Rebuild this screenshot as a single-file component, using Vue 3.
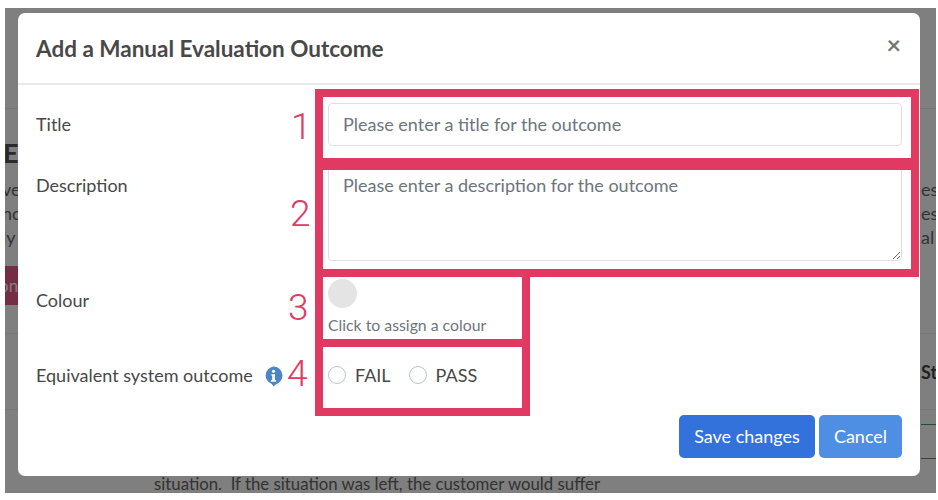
<template>
  <div class="frame">
    <!-- page behind the dialog -->
    <div class="page">
      <div class="page-row row-a"></div>
      <div class="page-row row-b">
        <span class="heading">E</span>
      </div>
      <div class="page-row row-text">
        <span class="left-frag">ve</span>
        <span class="right-frag">es t</span>
      </div>
      <div class="page-row row-text">
        <span class="left-frag">nc</span>
        <span class="right-frag">es</span>
      </div>
      <div class="page-row row-text">
        <span class="left-frag">ly</span>
        <span class="right-frag">al</span>
      </div>
      <div class="page-row row-btn">
        <span class="page-btn">on</span>
      </div>
      <div class="page-row row-head">
        <span class="right-head">St</span>
      </div>
      <div class="page-row row-green">
        <span class="green-box"></span>
      </div>
      <div class="page-row row-bottom">situation.&nbsp; If the situation was left, the customer would suffer</div>
    </div>

    <div class="backdrop">
      <div class="modal">
        <div class="modal-header">
          <h2>Add a Manual Evaluation Outcome</h2>
          <button class="close-btn">×</button>
        </div>

        <div class="modal-body">
          <label class="field-label">Title</label>
          <input class="text-input" type="text" placeholder="Please enter a title for the outcome" />

          <label class="field-label">Description</label>
          <textarea class="text-area" placeholder="Please enter a description for the outcome"></textarea>

          <label class="field-label">Colour</label>
          <div class="colour-cell">
            <span class="swatch"></span>
            <small>Click to assign a colour</small>
          </div>

          <label class="field-label label-system">
            Equivalent system outcome
            <svg class="info" viewBox="0 0 20 22" width="19" height="21">
              <path d="M10 0.5a9.5 9.5 0 0 1 2.6 18.6L10 21.5l-1.8-2.6A9.5 9.5 0 0 1 10 0.5z" fill="#4a86c5" />
              <circle cx="10" cy="5.6" r="1.7" fill="#fff" />
              <path d="M7.8 8.6h3.8v6.2h1.2v1.7H7.4v-1.7h1.2v-4.5h-0.8z" fill="#fff" />
            </svg>
          </label>
          <div class="radio-cell">
            <label class="radio" v-for="opt in outcomes" :key="opt">
              <span class="radio-dot"></span>{{ opt }}
            </label>
          </div>
        </div>

        <div class="modal-actions">
          <button class="btn btn-primary">Save changes</button>
          <button class="btn btn-secondary">Cancel</button>
        </div>

        <!-- annotation boxes drawn over the form -->
        <div v-for="box in boxes" :key="box.n" class="mark" :class="box.cls"></div>
        <span v-for="box in boxes" :key="'n' + box.n" class="mark-num" :class="'num-' + box.n">{{ box.n }}</span>
      </div>
    </div>
  </div>
</template>

<script setup>
const outcomes = ['FAIL', 'PASS']

const boxes = [
  { n: 1, cls: 'mark-1' },
  { n: 2, cls: 'mark-2' },
  { n: 3, cls: 'mark-3' },
  { n: 4, cls: 'mark-4' }
]
</script>

<style>
html, body {
  background: #fff;
}
</style>

<style scoped>
.frame {
  position: relative;
  width: 931px;
  height: 485px;
  margin: 8px 0 0 5px;
  overflow: hidden;
  font-family: Lato, "Liberation Sans", sans-serif;
  color: #343a40;
}

.page {
  height: 100%;
  background: #fff;
}

.page-row {
  display: flex;
  justify-content: space-between;
  align-items: center;
}

.row-a {
  height: 100px;
  border-bottom: 1px solid #eee;
}

.row-b {
  height: 68px;
  padding-top: 18px;
  box-sizing: border-box;
}

.heading {
  font-size: 27px;
  font-weight: 700;
  margin-left: -2px;
  color: #555;
}

.row-text {
  height: 24px;
  font-size: 18px;
  color: #666;
}

.left-frag {
  margin-left: -3px;
}

.right-frag {
  width: 15px;
  white-space: nowrap;
  overflow: hidden;
}

.row-btn {
  margin-top: 17px;
  height: 39px;
}

.page-btn {
  width: 13px;
  height: 39px;
  background: #e85a84;
  color: #fff;
  font-size: 17px;
  line-height: 39px;
  text-indent: -6px;
  overflow: hidden;
}

.row-head {
  height: 75px;
  margin-top: 28px;
  border-top: 1px solid #eee;
  border-bottom: 1px solid #eee;
  justify-content: flex-end;
}

.right-head {
  width: 15px;
  overflow: hidden;
  font-size: 18px;
  font-weight: 700;
  color: #444;
}

.row-green {
  margin-top: 14px;
  height: 35px;
  justify-content: flex-end;
}

.green-box {
  width: 15px;
  height: 35px;
  box-sizing: border-box;
  border-top: 1px solid #3fa34d;
  border-bottom: 1px solid #3fa34d;
}

.row-bottom {
  justify-content: flex-start;
  padding: 15px 0 0 149px;
  font-size: 16.8px;
  line-height: 20px;
  color: #666;
}

.backdrop {
  position: absolute;
  inset: 0;
  background: rgba(0, 0, 0, 0.5);
  padding: 5px 0 0 13px;
}

.modal {
  position: relative;
  width: 902px;
  height: 463px;
  box-sizing: border-box;
  background: #fff;
  border-radius: 7px;
  display: flex;
  flex-direction: column;
}

.modal-header {
  height: 72px;
  box-sizing: border-box;
  border-bottom: 2px solid #e9ecef;
  display: flex;
  justify-content: space-between;
  align-items: center;
  padding: 0 18px;
}

.modal-header h2 {
  margin: 0;
  font-size: 22.5px;
  font-weight: 700;
  color: #484848;
}

.close-btn {
  background: none;
  border: none;
  padding: 0;
  font-family: Lato, sans-serif;
  font-size: 25px;
  font-weight: 700;
  line-height: 1;
  color: #777;
  margin-bottom: 8px;
  margin-right: 1px;
}

.modal-body {
  display: grid;
  grid-template-columns: 292px 574px;
  padding: 18px 18px 0;
  row-gap: 18px;
  align-items: start;
}

.field-label {
  padding-top: 9px;
  font-size: 18px;
  line-height: 24px;
  color: #484848;
}

.label-system {
  display: flex;
  align-items: center;
  gap: 11px;
  padding-top: 10px;
  white-space: nowrap;
}

.info {
  flex: none;
  margin-top: 2px;
}

.text-input,
.text-area {
  display: block;
  width: 100%;
  box-sizing: border-box;
  border: 1px solid #dcdfe6;
  border-radius: 4px;
  padding: 8px 14px;
  font-family: Lato, sans-serif;
  font-size: 18px;
  line-height: 24px;
  color: #444;
  outline: none;
  background: #fff;
}

.text-input {
  height: 43px;
  padding-bottom: 10px;
}

.text-area {
  height: 97px;
}

.text-input::placeholder,
.text-area::placeholder {
  color: #6c757d;
  opacity: 1;
}

.colour-cell {
  display: flex;
  flex-direction: column;
  align-items: flex-start;
}

.swatch {
  width: 29px;
  height: 29px;
  border-radius: 50%;
  background: #e4e4e4;
}

.colour-cell small {
  margin-top: 7px;
  font-size: 15.8px;
  line-height: 20px;
  color: #6c757d;
}

.radio-cell {
  display: flex;
  gap: 18px;
  padding-top: 10px;
  height: 24px;
  align-items: center;
}

.radio {
  display: flex;
  align-items: center;
  gap: 9px;
  font-size: 18px;
  line-height: 24px;
  color: #484848;
}

.radio-dot {
  width: 18px;
  height: 18px;
  box-sizing: border-box;
  border: 1px solid #b9c3cf;
  border-radius: 50%;
  background: #fff;
}

.modal-actions {
  margin-top: auto;
  display: flex;
  justify-content: flex-end;
  gap: 4px;
  padding: 0 18px 18px 0;
}

.btn {
  height: 43px;
  border: none;
  border-radius: 5px;
  padding: 0 0 2px;
  color: #fff;
  font-family: Lato, sans-serif;
  font-size: 18px;
}

.btn-primary {
  width: 136px;
  background: #3371db;
}

.btn-secondary {
  width: 83px;
  background: #4f8fe3;
}

.mark {
  position: absolute;
  box-sizing: border-box;
  border: 8px solid #e03a62;
}

.mark-1 {
  left: 297px;
  top: 76px;
  width: 604px;
  height: 77px;
}

.mark-2 {
  left: 297px;
  top: 149px;
  width: 604px;
  height: 115px;
}

.mark-3 {
  left: 297px;
  top: 256px;
  width: 215px;
  height: 78px;
}

.mark-4 {
  left: 297px;
  top: 326px;
  width: 215px;
  height: 77px;
}

.mark-num {
  position: absolute;
  font-family: Roboto, sans-serif;
  font-weight: 300;
  font-size: 37px;
  line-height: 44px;
  color: #e03a62;
}

.num-1 { left: 273px; top: 92px; }
.num-2 { left: 272px; top: 179px; }
.num-3 { left: 270px; top: 273px; }
.num-4 { left: 269px; top: 339px; }
</style>
